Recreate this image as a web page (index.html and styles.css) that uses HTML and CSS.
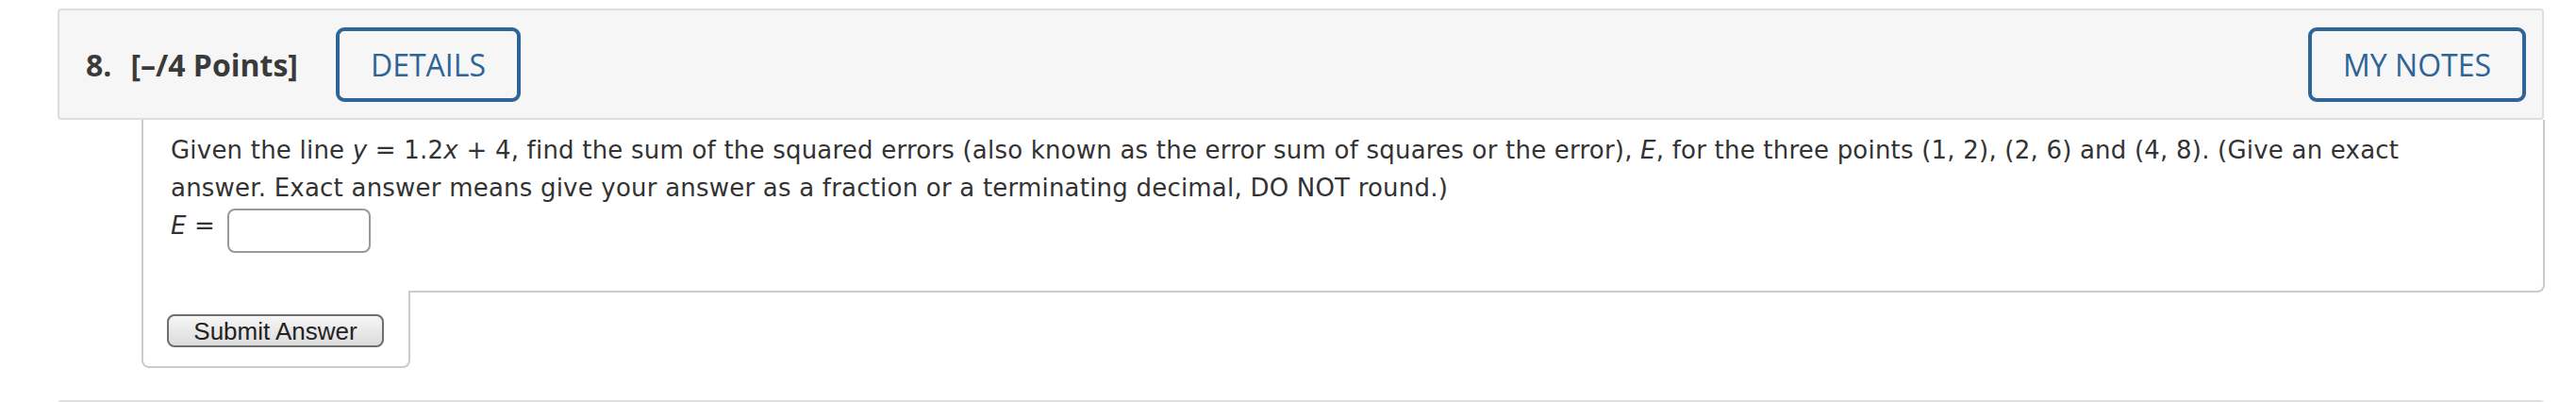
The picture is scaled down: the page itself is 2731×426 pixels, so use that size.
FILE: index.html
```html
<!DOCTYPE html>
<html lang="en">
<head>
<meta charset="utf-8">
<title>Question 8</title>
<link rel="stylesheet" href="styles.css">
</head>
<body>
<div class="page">
  <div class="q-header">
    <div class="q-title"><span class="q-num">8.</span><span class="q-points">[–/4 Points]</span></div>
    <button class="outline-btn details">DETAILS</button>
    <div class="spacer"></div>
    <button class="outline-btn">MY NOTES</button>
  </div>
  <div class="q-body">
    <div class="q-text">
      <p>Given the line <i>y</i> = 1.2<i>x</i> + 4, find the sum of the squared errors (also known as the error sum of squares or the error), <i>E</i>, for the three points (1, 2), (2, 6) and (4, 8). (Give an exact answer. Exact answer means give your answer as a fraction or a terminating decimal, DO NOT round.)</p>
      <p class="answer-line"><i>E</i> = <span class="answer-box"></span></p>
    </div>
    <div class="submit-area">
      <button class="submit-btn">Submit Answer</button>
    </div>
  </div>
  <div class="q-header next"></div>
</div>
</body>
</html>
```

FILE: styles.css
```css
html, body {
  margin: 0;
  padding: 0;
  background: #ffffff;
}

.page {
  padding: 9px 34px 0 61px;
}

.q-header {
  display: flex;
  align-items: center;
  height: 118px;
  box-sizing: border-box;
  padding: 0 17px 0 28px;
  background: #f6f6f6;
  border: 2px solid #dedede;
  border-radius: 4px;
  font-family: "Open Sans", "DejaVu Sans", sans-serif;
}

.q-title {
  font-size: 32px;
  font-weight: 700;
  color: #3a3a3a;
  display: flex;
  gap: 20px;
}

.spacer {
  flex: 1;
}

.outline-btn {
  height: 79px;
  box-sizing: border-box;
  padding: 0 33px;
  background: transparent;
  border: 4px solid #2e6496;
  border-radius: 9px;
  color: #2e6496;
  font-family: "Open Sans", "DejaVu Sans", sans-serif;
  font-size: 32px;
  font-weight: 400;
}

.details {
  margin-left: 40px;
}

.q-body {
  margin-left: 89px;
  margin-right: -1px;
}

.q-text {
  border: 2px solid #cbcbcb;
  border-top: none;
  border-bottom-right-radius: 8px;
  padding: 12px 70px 40px 29px;
  font-family: "DejaVu Sans", Verdana, sans-serif;
  font-size: 26px;
  letter-spacing: 0.21px;
  line-height: 40px;
  color: #333333;
}

.q-text p {
  margin: 0;
}

.answer-box {
  display: inline-block;
  width: 152px;
  height: 47px;
  box-sizing: border-box;
  border: 2px solid #9a9a9a;
  border-radius: 8px;
  background: #ffffff;
  vertical-align: -20px;
  margin-left: 4px;
}

.submit-area {
  width: 285px;
  box-sizing: border-box;
  margin-top: -2px;
  height: 82px;
  padding: 25px 0 0 25px;
  background: #ffffff;
  border: 2px solid #cbcbcb;
  border-top: none;
  border-radius: 0 0 8px 8px;
}

.submit-btn {
  width: 230px;
  height: 35px;
  box-sizing: border-box;
  padding: 0;
  border: 2px solid #6e6e6e;
  border-radius: 8px;
  background: linear-gradient(#f6f6f6, #dcdcdc);
  font-family: "Liberation Sans", Arial, sans-serif;
  font-size: 26px;
  line-height: 30px;
  color: #222222;
}

.q-header.next {
  margin-top: 34px;
  height: 10px;
  border-bottom: none;
  border-radius: 4px 4px 0 0;
}
```
